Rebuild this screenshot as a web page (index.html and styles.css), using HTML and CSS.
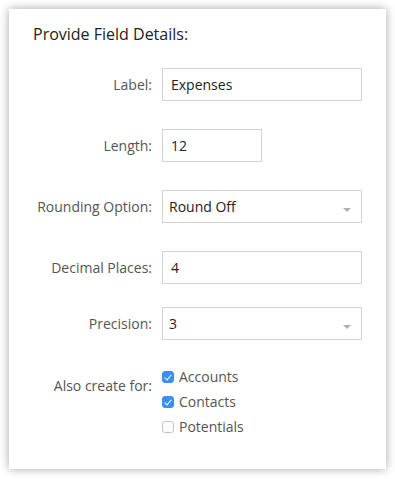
FILE: index.html
```html
<!DOCTYPE html>
<html lang="en">

<head>
    <meta charset="UTF-8">
    <meta name="viewport" content="width=device-width, initial-scale=1.0">
    <title>Provide Field Details</title>
    <link rel="stylesheet" href="styles.css">
</head>

<body>
    <div class="details-card">
        <h2>Provide Field Details:</h2>

        <div class="field-list">
            <div class="field-row">
                <label for="fieldLabel">Label:</label>
                <input type="text" id="fieldLabel" value="Expenses">
            </div>

            <div class="field-row">
                <label for="fieldLength">Length:</label>
                <input type="text" id="fieldLength" class="short" value="12">
            </div>

            <div class="field-row">
                <label for="roundingOption">Rounding Option:</label>
                <div class="select-wrap">
                    <select id="roundingOption">
                        <option>Round Off</option>
                        <option>Round Up</option>
                        <option>Round Down</option>
                    </select>
                </div>
            </div>

            <div class="field-row">
                <label for="decimalPlaces">Decimal Places:</label>
                <input type="text" id="decimalPlaces" value="4">
            </div>

            <div class="field-row close">
                <label for="precision">Precision:</label>
                <div class="select-wrap">
                    <select id="precision">
                        <option>3</option>
                        <option>4</option>
                    </select>
                </div>
            </div>

            <!-- Modules to create the field in -->
            <div class="field-row checks-row">
                <label class="checks-label">Also create for:</label>
                <div class="check-list">
                    <label class="check-item"><input type="checkbox" checked> Accounts</label>
                    <label class="check-item"><input type="checkbox" checked> Contacts</label>
                    <label class="check-item"><input type="checkbox"> Potentials</label>
                </div>
            </div>
        </div>
    </div>
</body>

</html>
```

FILE: styles.css
```css
body {
    margin: 0;
    background: #fff;
    font-family: "Open Sans", "DejaVu Sans", sans-serif;
}

/* Card holding the form */
.details-card {
    margin: 9px;
    width: 377px;
    height: 460px;
    box-sizing: border-box;
    padding: 14px 24px 0;
    background: #fff;
    box-shadow: 0 0 9px rgba(0, 0, 0, 0.35);
}

.details-card h2 {
    margin: 0;
    font-size: 16px;
    line-height: 22px;
    font-weight: normal;
    color: #222;
}

.field-list {
    display: flex;
    flex-direction: column;
    gap: 28px;
    margin-top: 23px;
}

.field-row {
    display: grid;
    grid-template-columns: 119px 200px;
    column-gap: 10px;
    align-items: center;
}

.field-row.close {
    margin-top: -5px;
}

.field-row > label {
    text-align: right;
    font-size: 14px;
    color: #555;
}

.field-row input[type="text"],
.field-row select {
    width: 100%;
    height: 33px;
    box-sizing: border-box;
    padding: 0 8px;
    border: 1px solid #d3d3d3;
    border-radius: 0;
    background: #fff;
    font-family: inherit;
    font-size: 14px;
    color: #222;
    outline: none;
}

.field-row input.short {
    width: 100px;
}

.select-wrap {
    position: relative;
}

.select-wrap select {
    appearance: none;
    -webkit-appearance: none;
    padding-left: 6px;
}

/* small grey dropdown arrow */
.select-wrap::after {
    content: "";
    position: absolute;
    right: 11px;
    top: 18px;
    border-left: 4px solid transparent;
    border-right: 4px solid transparent;
    border-top: 4px solid #b0b0b0;
    pointer-events: none;
}

/* Checkbox group */
.field-row.checks-row {
    align-items: start;
    margin-top: -4px;
}

.checks-label {
    padding-top: 12px;
    line-height: 20px;
}

.check-list {
    display: flex;
    flex-direction: column;
}

.check-item {
    display: flex;
    align-items: center;
    gap: 5px;
    height: 25px;
    font-size: 14px;
    color: #555;
}

.check-item input {
    appearance: none;
    -webkit-appearance: none;
    position: relative;
    width: 12px;
    height: 12px;
    margin: 0;
    box-sizing: border-box;
    border: 1px solid #c4c4c4;
    border-radius: 3px;
    background: #fff;
}

.check-item input:checked {
    border-color: #3a8ff6;
    background: #3a8ff6;
}

.check-item input:checked::after {
    content: "";
    position: absolute;
    left: 3px;
    top: 1px;
    width: 3px;
    height: 6px;
    border: solid #fff;
    border-width: 0 1.5px 1.5px 0;
    transform: rotate(40deg);
}
```
